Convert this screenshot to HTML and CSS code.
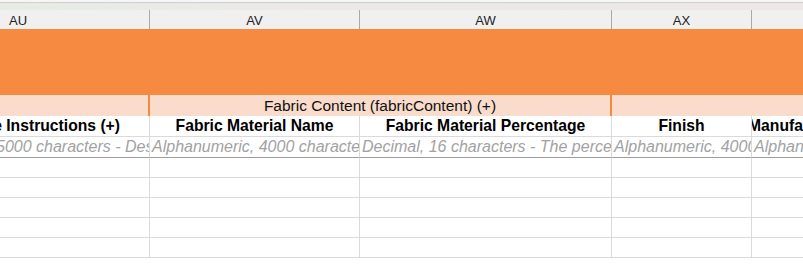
FILE: index.html
```html
<!DOCTYPE html>
<html lang="en">
<head>
  <meta charset="UTF-8" />
  <meta name="viewport" content="width=device-width, initial-scale=1.0"/>
  <title>Sheet - Fabric Content</title>
  <link rel="stylesheet" href="styles.css">
</head>
<body>
  <div class="chrome"></div>

  <div class="sheet">
    <div class="row letters">
      <div class="cell first">AU</div>
      <div class="cell">AV</div>
      <div class="cell">AW</div>
      <div class="cell">AX</div>
      <div class="cell"></div>
    </div>

    <div class="banner"></div>

    <div class="row groups">
      <div class="cell"></div>
      <div class="cell group">Fabric Content (fabricContent) (+)</div>
      <div class="cell wide"></div>
    </div>

    <div class="row heads">
      <div class="cell right"><span>Care Instructions (+)</span></div>
      <div class="cell">Fabric Material Name</div>
      <div class="cell">Fabric Material Percentage</div>
      <div class="cell">Finish</div>
      <div class="cell left"><span class="cut">Manufacturer</span></div>
    </div>

    <div class="row descs">
      <div class="cell"><span class="cut">5000 characters - Describe the care instructions</span></div>
      <div class="cell">Alphanumeric, 4000 characters - The material name</div>
      <div class="cell">Decimal, 16 characters - The percentage of material</div>
      <div class="cell">Alphanumeric, 4000 characters</div>
      <div class="cell">Alphanumeric, 4000 characters</div>
    </div>

    <div class="row data"><div class="cell"></div><div class="cell"></div><div class="cell"></div><div class="cell"></div><div class="cell"></div></div>
    <div class="row data"><div class="cell"></div><div class="cell"></div><div class="cell"></div><div class="cell"></div><div class="cell"></div></div>
    <div class="row data"><div class="cell"></div><div class="cell"></div><div class="cell"></div><div class="cell"></div><div class="cell"></div></div>
    <div class="row data"><div class="cell"></div><div class="cell"></div><div class="cell"></div><div class="cell"></div><div class="cell"></div></div>
    <div class="row data"><div class="cell"></div><div class="cell"></div><div class="cell"></div><div class="cell"></div><div class="cell"></div></div>
  </div>
</body>
</html>
```

FILE: styles.css
```css
body {
  margin: 0;
  font-family: "Liberation Sans", Arial, sans-serif;
  background: #fff;
  overflow: hidden;
  width: 803px;
  height: 269px;
}
.chrome {
  height: 7px;
  padding-bottom: 1px;
  border-top: 2px solid #f6f6f6;
  box-shadow: inset 0 1px 0 #cfcfcf;
  background: linear-gradient(to right, #e6ece4, #ece8e8 40%, #ede7e7);
}
.sheet {
  width: 952px;
}
.row {
  display: grid;
  grid-template-columns: 150px 210px 252px 140px 200px;
}
.cell {
  box-sizing: border-box;
  overflow: hidden;
  white-space: nowrap;
  display: flex;
  align-items: center;
  justify-content: center;
}

.letters {
  height: 19px;
  background: #f0f0f0;
  font-size: 13px;
  color: #222;
}
.letters .cell {
  border-right: 1px solid #a9a9a9;
  padding-top: 1px;
}
.letters .first {
  justify-content: flex-start;
  padding-left: 9px;
}

.banner {
  height: 66px;
  background: #f58a40;
}

.groups {
  height: 21px;
  background: #f9dccc;
  font-size: 15.5px;
  color: #111;
}
.groups .cell {
  border-right: 2px solid #f58a40;
}
.groups .group {
  grid-column: span 2;
}
.groups .wide {
  grid-column: span 2;
  border-right: 0;
}

.heads {
  height: 21px;
  font-size: 15.7px;
  font-weight: bold;
  color: #000;
}
.heads .cell,
.descs .cell,
.data .cell {
  border-right: 1px solid #dadada;
  border-bottom: 1px solid #dadada;
}
.heads .right {
  justify-content: flex-end;
  padding-right: 29px;
}
.heads .right span {
  flex-shrink: 0;
}
.heads .left {
  justify-content: flex-start;
}
.cut {
  margin-left: -4px;
}

.descs {
  height: 21px;
  font-size: 16px;
  font-style: italic;
  color: #a2a2a2;
}
.descs .cell {
  justify-content: flex-start;
  padding-left: 2px;
  border-bottom-color: #9e9e9e;
}
.descs .cell:first-child {
  padding-left: 0;
}

.data {
  height: 20px;
}
```
